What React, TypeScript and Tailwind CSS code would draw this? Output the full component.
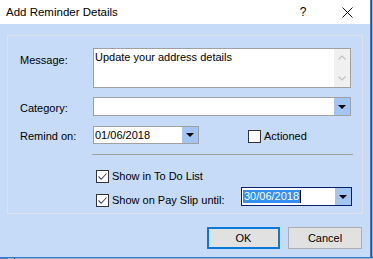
import React from "react";

function DropBtn() {
  return (
    <div className="w-[16px] h-full bg-[#a3c5f3] flex items-center justify-center">
      <div className="w-0 h-0 border-l-[4px] border-r-[4px] border-t-[4px] border-l-transparent border-r-transparent border-t-black" />
    </div>
  );
}

function Check({ checked }: { checked: boolean }) {
  return (
    <div className="w-[13px] h-[13px] bg-white border border-[#333333] shrink-0 flex items-center justify-center">
      {checked && (
        <svg width="11" height="11" viewBox="0 0 11 11">
          <path d="M1.5 5.5 L4.2 8.3 L9.5 2.5" fill="none" stroke="#4a4a4a" strokeWidth="1.1" />
        </svg>
      )}
    </div>
  );
}

export default function App() {
  return (
    <div className="w-[373px] h-[259px] flex flex-col overflow-hidden bg-[#c5dbf7] text-[11px] leading-[13px] text-black font-['Liberation_Sans',Arial,sans-serif]">
      <div className="flex h-[257px]">
        <div className="w-[370px] flex flex-col">
          {/* title bar */}
          <div className="h-[24px] bg-white flex items-center shrink-0">
            <span className="ml-[6px] text-[11.5px] text-black">Add Reminder Details</span>
            <span className="ml-auto text-[12px] w-[8px] text-center">?</span>
            <svg className="ml-[35px] mr-[17px]" width="11" height="11" viewBox="0 0 11 11">
              <path d="M0.5 0.5 L10.5 10.5 M10.5 0.5 L0.5 10.5" stroke="#111" strokeWidth="1" />
            </svg>
          </div>
          {/* group box */}
          <div className="ml-[7px] mt-[11px] w-[356px] h-[179px] border border-[#dde2ea] pl-[12px] pt-[12px] flex flex-col">
            {/* message */}
            <div className="flex">
              <div className="w-[73px] pt-[6px]">Message:</div>
              <div className="w-[258px] h-[40px] border border-[#a0a0a0] bg-white flex">
                <div className="flex-1 pl-[1px] pt-[2px]">Update your address details</div>
                <div className="w-[16px] h-full bg-[#f0f0f0] flex flex-col items-center justify-between py-[6px]">
                  <svg width="8" height="5" viewBox="0 0 8 5">
                    <path d="M0.5 4.5 L4 1 L7.5 4.5" fill="none" stroke="#c2c2c2" strokeWidth="1.2" />
                  </svg>
                  <svg width="8" height="5" viewBox="0 0 8 5">
                    <path d="M0.5 0.5 L4 4 L7.5 0.5" fill="none" stroke="#c2c2c2" strokeWidth="1.2" />
                  </svg>
                </div>
              </div>
            </div>
            {/* category */}
            <div className="flex items-center mt-[9px]">
              <div className="w-[73px] pt-[3px]">Category:</div>
              <div className="w-[258px] h-[19px] border border-[#a0a0a0] bg-white flex justify-end">
                <DropBtn />
              </div>
            </div>
            {/* remind on */}
            <div className="flex items-center mt-[10px]">
              <div className="w-[73px] pt-[3px]">Remind on:</div>
              <div className="w-[106px] h-[18px] border border-[#a0a0a0] bg-white flex">
                <div className="flex-1 pl-[1px] pt-[2px]">01/06/2018</div>
                <DropBtn />
              </div>
              <div className="ml-[49px] mt-[3px] flex items-center">
                <Check checked={false} />
                <span className="ml-[3px]">Actioned</span>
              </div>
            </div>
            {/* separator */}
            <div className="ml-[72px] mt-[10px] w-[261px] h-[1px] bg-[#a0a0a0]" />
            {/* show in to do */}
            <div className="ml-[76px] mt-[14px] flex items-center">
              <Check checked={true} />
              <span className="ml-[3px] pt-[1px]">Show in To Do List</span>
            </div>
            {/* pay slip */}
            <div className="ml-[76px] mt-[4px] flex items-start">
              <div className="mt-[6px] flex items-center">
                <Check checked={true} />
                <span className="ml-[3px] pt-[1px] w-[129px]">Show on Pay Slip until:</span>
              </div>
              <div className="w-[111px] h-[19px] border border-[#0a1f6e] bg-white flex">
                <div className="flex-1 flex items-center pl-[1px]">
                  <span className="bg-[#3390f0] text-white px-[1px] leading-[13px]">30/06/2018</span>
                  <span className="w-[1px] h-[13px] bg-black" />
                </div>
                <DropBtn />
              </div>
            </div>
          </div>
          {/* buttons */}
          <div className="mt-[13px] flex justify-end pr-[8px] gap-[8px]">
            <div className="w-[73px] h-[22px] border-2 border-[#0a78d7] bg-[#e1e1e1] flex items-center justify-center">OK</div>
            <div className="w-[74px] h-[22px] border border-[#adadad] bg-[#e1e1e1] flex items-center justify-center">Cancel</div>
          </div>
        </div>
        <div className="w-[1px] bg-[#3f7cc4]" />
        <div className="w-[1px] bg-[#1c4f8c]" />
        <div className="w-[1px] bg-[#9cbde6]" />
      </div>
      <div className="h-[1px] bg-[#2f7ad0]" />
      <div className="h-[1px] bg-[#a7aeb6] flex">
        <div className="w-[8px] bg-[#4c86c8]" />
        <div className="w-[6px]" />
        <div className="w-[1px] bg-[#1a2f6e]" />
      </div>
    </div>
  );
}
